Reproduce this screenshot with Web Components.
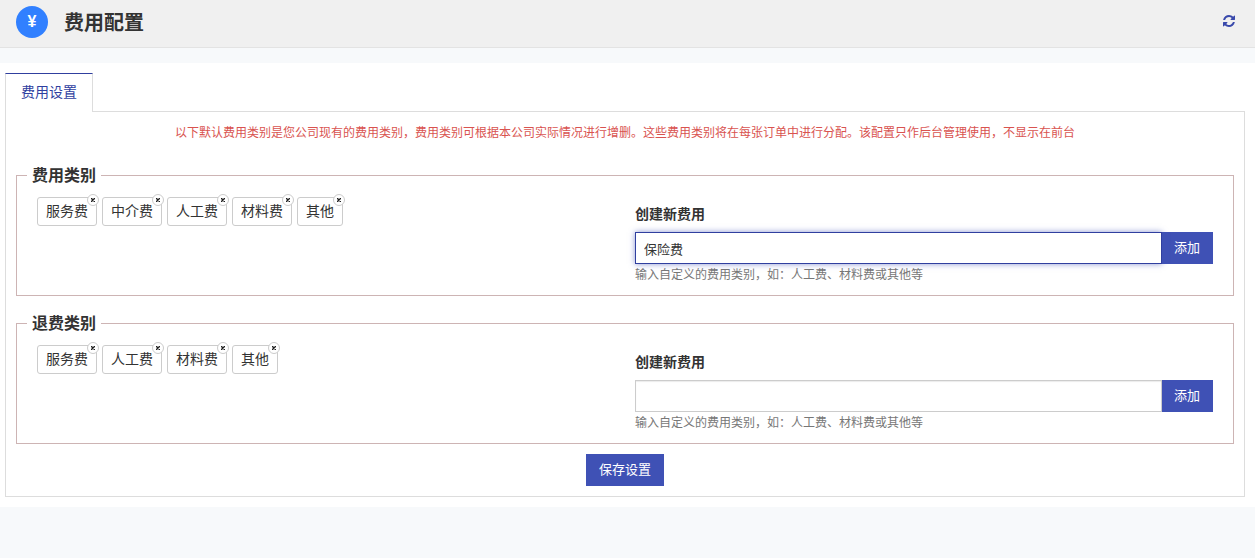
<!DOCTYPE html>
<html lang="zh-CN">
<head>
<meta charset="utf-8">
<title>费用配置</title>
<style>
body { margin: 0; background: #f7f9fb; color: #333; font: 14px/20px "Noto Sans CJK SC", sans-serif; }
</style>
</head>
<body>
<page-header heading="费用配置"></page-header>
<main>
<tab-panel tab="费用设置">
  <notice-line>以下默认费用类别是您公司现有的费用类别，费用类别可根据本公司实际情况进行增删。这些费用类别将在每张订单中进行分配。该配置只作后台管理使用，不显示在前台</notice-line>
  <fee-group legend="费用类别" tags="服务费,中介费,人工费,材料费,其他" value="保险费" active></fee-group>
  <fee-group legend="退费类别" tags="服务费,人工费,材料费,其他" value=""></fee-group>
  <action-button slot="footer">保存设置</action-button>
</tab-panel>
</main>
<script>
class Base extends HTMLElement {
  connectedCallback() {
    if (!this.shadowRoot) this.attachShadow({ mode: 'open' }).innerHTML = this.render();
  }
}

customElements.define('page-header', class extends Base {
  render() {
    return `<style>
      :host { display: block; }
      header { display: flex; align-items: center; gap: 16px; padding: 0 20px 3px 16px; height: 44px; background: #f0f0f0; border-bottom: 1px solid #e3e3e3; }
      .badge { display: flex; align-items: center; justify-content: center; width: 32px; height: 32px; border-radius: 50%; background: #3180ff; color: #fff; font: bold 16px/20px "Liberation Sans", sans-serif; }
      h1 { flex: 1; margin: 0; font-size: 20px; line-height: 28px; font-weight: 700; }
      a { display: flex; padding-bottom: 2px; color: #3949ab; }
    </style>
    <header>
      <span class="badge">¥</span><h1>${this.getAttribute('heading')}</h1>
      <a href="#" aria-label="刷新"><svg width="12" height="12" viewBox="0 0 1536 1536" fill="currentColor"><path d="M1511 928q0 5-1 7-64 268-268 434.500t-478 166.500q-146 0-282.500-55t-243.500-157l-129 129q-19 19-45 19t-45-19-19-45v-448q0-26 19-45t45-19h448q26 0 45 19t19 45-19 45l-137 137q71 66 161 102t187 36q134 0 250-65t186-179q11-17 53-117 8-23 30-23h192q13 0 22.500 9.500t9.500 22.500zm25-800v448q0 26-19 45t-45 19h-448q-26 0-45-19t-19-45 19-45l138-138q-148-137-349-137-134 0-250 65t-186 179q-11 17-53 117-8 23-30 23h-199q-13 0-22.500-9.500t-9.500-22.500v-7q65-268 270-434.500t480-166.500q146 0 284 55.500t245 156.500l130-129q19-19 45-19t45 19 19 45z"/></svg></a>
    </header>`;
  }
});

customElements.define('tab-panel', class extends Base {
  render() {
    return `<style>
      :host { display: block; margin-top: 15px; padding: 10px 10px 10px 5px; background: #fff; }
      nav { display: flex; }
      a { position: relative; z-index: 1; padding: 7px 15px 11px; margin-bottom: -1px; border: 1px solid #ddd; border-top-color: #303f9f; border-bottom: 0; background: #fff; color: #303f9f; text-decoration: none; }
      section { padding: 10px; border: 1px solid #ddd; }
      .content { display: grid; gap: 15px; }
      footer { display: flex; justify-content: center; margin-top: 10px; }
    </style>
    <nav><a href="#" aria-current="page">${this.getAttribute('tab')}</a></nav>
    <section><div class="content"><slot></slot></div><footer><slot name="footer"></slot></footer></section>`;
  }
});

customElements.define('notice-line', class extends Base {
  render() {
    return `<style>
      :host { display: block; padding-bottom: 6px; text-align: center; font-size: 12px; color: #d9534f; }
    </style><slot></slot>`;
  }
});

customElements.define('action-button', class extends Base {
  render() {
    return `<style>
      :host { display: block; }
      button { display: block; height: 32px; padding: 0 12px 2px; border: 1px solid #3f51b5; background: #3f51b5; color: #fff; font: inherit; font-size: 13px; line-height: 28px; cursor: pointer; }
    </style><button type="button"><slot></slot></button>`;
  }
});

customElements.define('fee-tag', class extends Base {
  render() {
    return `<style>
      :host { display: block; position: relative; padding: 2px 8px 5px; border: 1px solid #ccc; border-radius: 3px; background: #fff; }
      button { position: absolute; top: -4px; right: -3px; display: flex; align-items: center; justify-content: center; width: 12px; height: 12px; padding: 0; border: 1px solid #ccc; border-radius: 50%; background: #fff; color: #222; }
    </style><slot></slot><button type="button" aria-label="删除"><svg width="4" height="4" viewBox="0 0 4 4"><path d="M0 0L4 4M4 0L0 4" stroke="currentColor" stroke-width="1.4"/></svg></button>`;
  }
});

customElements.define('fee-group', class extends Base {
  render() {
    const tags = this.getAttribute('tags').split(',').map(t => `<fee-tag>${t}</fee-tag>`).join('');
    return `<style>
      :host { display: block; }
      fieldset { margin: 0; padding: 10px 20px 11px; min-width: 0; border: 1px solid #cdb4b4; }
      legend { margin-left: -10px; padding: 0 5px 2px; font-size: 16px; line-height: 22px; font-weight: 700; }
      .cols { display: grid; grid-template-columns: 1fr 1fr; gap: 20px; }
      .tags { display: flex; flex-wrap: wrap; align-items: flex-start; gap: 5px; }
      .form { display: grid; padding-top: 6px; }
      label { font-weight: 700; margin-bottom: 9px; }
      .row { display: flex; }
      input { position: relative; flex: 1; min-width: 0; box-sizing: border-box; height: 32px; margin: 0 -1px 0 0; padding: 0 8px; border: 1px solid #ccc; border-radius: 0; outline: 0; background: #fff; box-shadow: inset 0 1px 1px rgba(0,0,0,.08); color: #333; font: inherit; font-size: 13px; }
      :host([active]) input, input:focus { border-color: #303f9f; box-shadow: 0 0 6px rgba(63,81,181,.6); }
      p { margin: 0; font-size: 12px; color: #777; }
    </style>
    <fieldset><legend>${this.getAttribute('legend')}</legend>
      <div class="cols">
        <div class="tags">${tags}</div>
        <div class="form">
          <label for="name">创建新费用</label>
          <div class="row"><input id="name" type="text" value="${this.getAttribute('value')}" aria-describedby="help"><action-button>添加</action-button></div>
          <p id="help">输入自定义的费用类别，如：人工费、材料费或其他等</p>
        </div>
      </div>
    </fieldset>`;
  }
});
</script>
</body>
</html>
